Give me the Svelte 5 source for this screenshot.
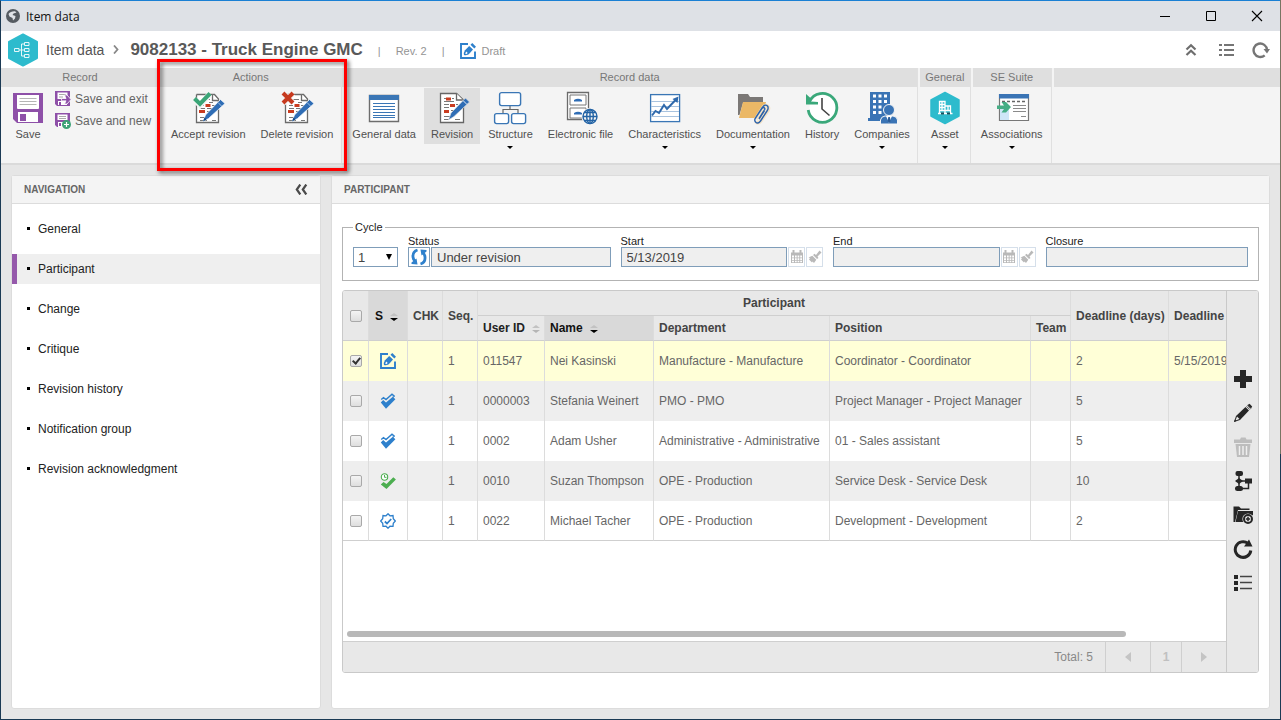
<script>
  const actions = [
    { label: 'Accept revision', icon: 'accept' },
    { label: 'Delete revision', icon: 'delete' }
  ];
  const recordData = [
    { label: 'General data', icon: 'general' },
    { label: 'Revision', icon: 'revision', active: true },
    { label: 'Structure', icon: 'structure', menu: true },
    { label: 'Electronic file', icon: 'efile' },
    { label: 'Characteristics', icon: 'chart', menu: true },
    { label: 'Documentation', icon: 'docs', menu: true },
    { label: 'History', icon: 'history' },
    { label: 'Companies', icon: 'companies', menu: true }
  ];
  const groups = [
    { title: 'Actions', cls: 'g-actions', marked: true, items: actions },
    { title: 'Record data', cls: 'g-data', items: recordData },
    { title: 'General', cls: 'g-general', items: [{ label: 'Asset', icon: 'asset', menu: true }] },
    { title: 'SE Suite', cls: 'g-suite', items: [{ label: 'Associations', icon: 'assoc', menu: true }] }
  ];
  const nav = ['General', 'Participant', 'Change', 'Critique', 'Revision history', 'Notification group', 'Revision acknowledgment'];
  let current = $state('Participant');

  let rows = $state([
    { on: true, icon: 'draft', seq: 1, id: '011547', name: 'Nei Kasinski', dept: 'Manufacture - Manufacture', pos: 'Coordinator - Coordinator', days: 2, due: '5/15/2019' },
    { on: false, icon: 'checks', seq: 1, id: '0000003', name: 'Stefania Weinert', dept: 'PMO - PMO', pos: 'Project Manager - Project Manager', days: 5, due: '' },
    { on: false, icon: 'checks', seq: 1, id: '0002', name: 'Adam Usher', dept: 'Administrative - Administrative', pos: '01 - Sales assistant', days: 5, due: '' },
    { on: false, icon: 'timed', seq: 1, id: '0010', name: 'Suzan Thompson', dept: 'OPE - Production', pos: 'Service Desk - Service Desk', days: 10, due: '' },
    { on: false, icon: 'badge', seq: 1, id: '0022', name: 'Michael Tacher', dept: 'OPE - Production', pos: 'Development - Development', days: 2, due: '' }
  ]);
  const tools = ['plus', 'pencil', 'trash', 'flow', 'folder', 'refresh', 'list'];
  const cols = [26, 39, 35, 35, 67, 109, 176, 201, 40, 98, 168];
</script>

{#snippet sheet()}
  <path d="M6.500 3.500H24.500L28.500 8V31.500H6.500V3.500" fill="#fff" stroke="#6b6b6b" stroke-width="1.300" />
  <path d="M22.500 3.500V9.500H28.500" fill="#fff" stroke="#6b6b6b" stroke-width="1.300" />
  <path d="M14 8.500H20M10 11.500H13M19 11.500H23M10 14.500h4M22 14.500h3M10 17.500H15M17 17.500H22M17 20.500H21M17 23.500H20M10 26.500H17M10 29.500H17M22 29.500H26" stroke="#777" fill="none" />
  <path d="M15.500 13h5v3h-5zM9 19h6v3h-6z" fill="#c93c20" />
{/snippet}

{#snippet pen()}
  <path d="M30.500 8.500L35 12.500L18.500 27.500L13 30.500L15.500 24z" fill="#2f6db5" stroke="#fff" stroke-width=".7" />
  <path d="M28 11.500L31.500 15" stroke="#9fbfe3" stroke-width="1" />
  <path d="M13 30.500L14.500 26.500L16.500 28.500z" fill="#174a86" />
{/snippet}

{#snippet big(name)}
  <svg class="big" viewBox="0 0 36 34" aria-hidden="true">
    {#if name === 'accept'}
      {@render sheet()}{@render pen()}
      <path d="M4.500 8.500L10 14L20 3" fill="none" stroke="#f5f5f5" stroke-width="6" />
      <path d="M4.500 7.500L10 13L20 2.500" fill="none" stroke="#3aa577" stroke-width="4" />
    {:else if name === 'delete'}
      {@render sheet()}{@render pen()}
      <path d="M4.500 2.500L14 12M14 2.500L4.500 12" fill="none" stroke="#f5f5f5" stroke-width="6" />
      <path d="M4 2L14 12M14 2L4 12" fill="none" stroke="#c63a1f" stroke-width="4" />
    {:else if name === 'general'}
      <path d="M3.500 4.500H32.500V30.500H3.500z" fill="#fff" stroke="#6d6d6d" stroke-width="1.400" />
      <path d="M3 4H33V9H3z" fill="#3a76b5" />
      <path d="M7 12.500H29M7 15.500H29M7 18.500H29M7 21.500H29M7 24.500H29M7 26.500H29" stroke="#3a76b5" fill="none" />
    {:else if name === 'revision'}
      <path d="M6.500 2.500H22.500L29.500 9V31.500H6.500z" fill="#fff" stroke="#666" stroke-width="1.300" />
      <path d="M22.500 2.500V9H29" fill="#fff" stroke="#666" stroke-width="1.300" />
      <path d="M10 7.500h2M18 7.500h2M10 10.500H20M10 13.500h5M22 13.500h2M10 16.500h5M17 19.500h5M17 22.500h4M10 25.500H16M10 28.500H15M21 28.500H26" stroke="#777" fill="none" />
      <path d="M12 6.500h5v3h-5zM16 13h5v3h-5zM10 19h5v3h-5z" fill="#c93c20" />
      <path d="M31.500 7L35.500 11L20 25.500L14.500 29L17 22z" fill="#2f6db5" stroke="#dfdfdf" stroke-width=".7" />
      <path d="M29 9.500L33 13.500" stroke="#dfe9f5" stroke-width="1" />
    {:else if name === 'structure'}
      <path d="M18 14V18M11 23V18.500H26V23" fill="none" stroke="#666" stroke-width="1.200" />
      <rect x="7.600" y="1.600" width="21" height="13" rx="2" fill="#fff" stroke="#3a76b5" stroke-width="1.400" />
      <rect x="2.600" y="22.600" width="14" height="10" rx="2" fill="#fff" stroke="#3a76b5" stroke-width="1.400" />
      <rect x="19.600" y="22.600" width="14" height="10" rx="2" fill="#fff" stroke="#3a76b5" stroke-width="1.400" />
    {:else if name === 'efile'}
      <path d="M4.500 1.500H25.500V28.500H4.500z" fill="#fff" stroke="#6b6b6b" stroke-width="1.300" />
      <path d="M7 4H23V14H7zM7 17H23V27H7z" fill="#fff" stroke="#777" />
      <path d="M11 10.500V9Q15 6.500 19 9V10.500zM11 23.500V22Q15 19.500 19 22V23.500z" fill="#2f6db5" />
      <circle cx="27" cy="25.500" r="8.500" fill="#f5f5f5" />
      <g fill="none" stroke="#2363a5" stroke-width="1.400"><circle cx="27" cy="25.500" r="7" /><ellipse cx="27" cy="25.500" rx="3.300" ry="7" /><path d="M27 18.500V32.500M20 25.500H34M21.500 21.500H32.500M21.500 29.500H32.500" /></g>
    {:else if name === 'chart'}
      <rect x="3.600" y="3.600" width="29" height="27" fill="#fff" stroke="#3a76b5" stroke-width="1.300" />
      <path d="M4 10.500H32M4 15.500H32M4 20.500H32M4 25.500H32" stroke="#a9c3df" />
      <path d="M5 24.500L8.500 20L12 22L17 14L20 18L29.500 8" fill="none" stroke="#2f69ac" stroke-width="2" />
      <path d="M31.500 5.500L30.500 12L25.500 8z" fill="#2f69ac" />
    {:else if name === 'docs'}
      <path d="M3 3H13L15 6H28V12H8L4.500 24H3z" fill="#7b7876" />
      <path d="M8 11H31L27 27H4z" fill="#ebb866" />
      <g fill="none" stroke="#f4e4c8" stroke-width="4"><path d="M21 28L28 17Q31 13 33 16Q34 18 32 20.500L25.500 30Q23 33 21 30.500" /></g>
      <path d="M24 28L29.500 19.500M20.500 27L27 17Q30 12.500 32.500 15Q34 17 32 20L25.500 30Q23 33.500 20.500 31Q19 29 20.500 27L26.500 18Q29 15 30 18L24 27.500" fill="none" stroke="#2c62aa" stroke-width="1.400" />
    {:else if name === 'history'}
      <circle cx="18.500" cy="17" r="13" fill="#fff" />
      <path d="M5.500 10.500A14.400 14.400 0 1 1 4.200 19" fill="none" stroke="#3aa87a" stroke-width="2.800" />
      <path d="M2 3V13.500H14V11L7 10.500V7.500z" fill="#3aa87a" />
      <path d="M18 7V18L25.500 24.500" fill="none" stroke="#444" stroke-width="1.600" />
    {:else if name === 'companies'}
      <path d="M6 1H26V17H24V30H4V27H6z" fill="#3a74b5" />
      <path d="M9 3.500h3v3H9zm5.500 0h3v3h-3zm5.500 0h3v3h-3zM9 9h3v3H9zm5.500 0h3v3h-3zm5.500 0h3v3h-3zM9 14.500h3v3H9zm5.500 0h3v3h-3zM9 20h3v3H9zm5.500 0h3v3h-3z" fill="#fff" />
      <g fill="#3a74b5" stroke="#f5f5f5" stroke-width="1"><circle cx="25" cy="19" r="5.500" /><path d="M16.500 33V29Q17 25.500 21 25H29Q33 25.500 33.500 29V33z" /></g>
      <path d="M22 25L25 32L28 25z" fill="#fff" /><path d="M24.300 26h1.600l.8 4-1.600 2-1.600-2z" fill="#2a5c98" />
    {:else if name === 'asset'}
      <path d="M18 1.500L32 9V25L18 32.500L4 25V9z" fill="#2dbbcd" stroke="#2dbbcd" stroke-width="1.500" stroke-linejoin="round" />
      <path d="M11 22.500H25.500M12.500 22V10.500H18V22M18.500 15H23.500V22M12.500 13.500H18M12.500 16.500H18M12.500 19.500H23M15 10.500V20M21 15V20" fill="none" stroke="#fff" stroke-width="1.300" />
      <path d="M14 21.500h3v2h-3zM20 21.500h3v2h-3z" fill="#17505c" />
    {:else}
      <path d="M5.500 3.500H34.500V29.500H5.500z" fill="#fff" stroke="#777" stroke-width="1.200" />
      <path d="M6 17H15V29H6z" fill="#cfe6f7" /><path d="M5 3H35V7.500H5z" fill="#3a74b5" />
      <path d="M8 10.500H31" stroke="#666" stroke-width="1.500" stroke-dasharray="3 2" />
      <path d="M19 14.500H32M19 17.500H32M19 20.500H32M27 25.500H32" stroke="#8a8a8a" />
      <path d="M3 14.500H10L7.500 11H12L17 16L12 21.500H7.500L10 18H3z" fill="#45ae85" />
    {/if}
  </svg>
{/snippet}

{#snippet small(name)}
  <svg class="small" viewBox="0 0 16 16" aria-hidden="true">
    {#if name === 'draft'}
      <path d="M8 1H1V15H15V8.500" fill="none" stroke="#2e80cc" stroke-width="1.900" />
      <path d="M9.200 3L13 6.500L8.800 11.200Q6 12.800 4 12Q3.400 9.500 5 7.200z" fill="#2e80cc" /><path d="M10.500 1.800L12.300 0L16 3.700L14.300 5.400z" fill="#2e80cc" />
      <path d="M6.300 8.500L7.700 9.900L6.300 11.200L5.200 10.500z" fill="#fff" />
    {:else if name === 'checks'}
      <path d="M1.200 6.500L3.500 4.700L6 6.500L12 1.200L14.200 3L13 4.200" fill="none" stroke="#2e80cc" stroke-width="1.400" />
      <path d="M.8 9.500L3.200 7L6 9.500L12.800 3.700L15.400 6.200L6 15.800z" fill="#2e80cc" />
    {:else if name === 'timed'}
      <path d="M.8 11.500L3.500 9L6.500 11L13.300 4.300L15.900 6.500L6.500 16z" fill="#4cae50" />
      <circle cx="4.500" cy="4" r="3.200" fill="#fff" stroke="#4cae50" stroke-width="1.100" /><path d="M4.500 2V4.300H6.500" fill="none" stroke="#4cae50" />
    {:else}
      <path d="M8 .8L10 2.800L13 2.500L13.300 5.700L15.300 8L13.300 10.200L13 13.300L10 13.200L8 15.200L6 13.200L3 13.300L2.700 10.200L.7 8L2.700 5.700L3 2.500L6 2.800z" fill="none" stroke="#2e80cc" stroke-width="1.300" />
      <path d="M4.800 8.500L7 10.500L11.200 6" fill="none" stroke="#2e80cc" stroke-width="1.700" />
    {/if}
  </svg>
{/snippet}

{#snippet tool(name)}
  <svg class="tool-icon" viewBox="0 0 20 20" aria-hidden="true">
    {#if name === 'plus'}
      <path d="M7 1H13V7H19V13H13V19H7V13H1V7H7z" fill="#262626" />
    {:else if name === 'pencil'}
      <path d="M1 19L3 13L12.500 4L16 7.500L7 17z" fill="#262626" /><path d="M2.500 17.500L4 13.500L6.500 16z" fill="#e8e8e8" /><path d="M1 19L1.800 16.500L3.500 18z" fill="#262626" />
      <path d="M13.500 3.300L16.800 6.600M14.500 2.300L17.800 5.600" stroke="#262626" stroke-width=".8" /><path d="M14.500 2L16.500 .8L19.200 3.500L18 5.500z" fill="#262626" />
    {:else if name === 'trash'}
      <path d="M1 2.500H7L8 .5H12.500L13.500 2.500H19V6H1z" fill="#bdbdbd" /><path d="M2.500 7H17.500L16 20H4z" fill="#bdbdbd" />
      <path d="M6.500 9V18M10 9V18M13.500 9V18" stroke="#efefef" stroke-width="1.500" />
    {:else if name === 'flow'}
      <path d="M6 2V18M3 10H14M6 17.500H15.500V10" fill="none" stroke="#262626" stroke-width="1.500" />
      <rect x="2.500" y="0" width="7.500" height="5" rx="2" fill="#262626" /><path d="M6 7L10 10L6 13L2 10z" fill="#262626" /><rect x="12" y="7.500" width="7" height="5" fill="#262626" /><rect x="2" y="15" width="8" height="5" rx="2.500" fill="#262626" />
    {:else if name === 'folder'}
      <path d="M.5 17V1.500H6L8 3.500H16.500V5H5L2 17z" fill="#262626" /><path d="M5 6H20V10L11 17H2.500z" fill="#262626" />
      <circle cx="15" cy="14" r="5.600" fill="#e8e8e8" /><circle cx="15" cy="14" r="4" fill="none" stroke="#262626" stroke-width="2" /><path d="M15 11.800V16.200M12.800 14H17.200" stroke="#262626" stroke-width="1.500" />
    {:else if name === 'refresh'}
      <path d="M15 4.500A7.800 7.800 0 1 0 17.800 11.500" fill="none" stroke="#262626" stroke-width="3" /><path d="M16 .5L19.500 7.500H11z" fill="#262626" />
    {:else}
      <path d="M1 2H5V6H1zM1 8H5V12H1zM1 14H5V18H1z" fill="#262626" /><path d="M7 3.500H19M7 9.500H19M7 15.500H19" stroke="#444" stroke-width="1.300" />
    {/if}
  </svg>
{/snippet}

{#snippet sort(active)}
  <svg class="sort" class:active viewBox="0 0 8 8" aria-hidden="true"><path class="up" d="M0 3L4 0L8 3z" /><path class="down" d="M0 5H8L4 8z" /></svg>
{/snippet}

{#snippet dateButtons(what)}
  <button class="mini" disabled aria-label={'Pick ' + what + ' date'}>
    <svg viewBox="0 0 14 14"><path d="M1 2.500H13V13H1z" fill="#b9b9b9" /><path d="M3.500 0V4M10.500 0V4" stroke="#b9b9b9" stroke-width="2" /><path d="M2 5.500h2v2H2zM5 5.500h1.700v2H5zM7.600 5.500h1.700v2H7.600zM10.200 5.500H12v2h-1.800zM2 8.200h2v1.700H2zM5 8.200h1.700v1.700H5zM7.600 8.200h1.700v1.700H7.600zM10.200 8.200H12v1.700h-1.800zM2 10.700h2v1.500H2zM5 10.700h1.700v1.500H5zM7.600 10.700h1.700v1.500H7.600zM10.200 10.700H12v1.500h-1.800z" fill="#fff" /></svg>
  </button>
  <button class="mini" disabled aria-label={'Clear ' + what + ' date'}>
    <svg viewBox="0 0 14 14"><path d="M11.500 .5L13.500 2.500L9.500 6.500L10.500 8L9 9L5 5L6.500 3.800L8 5z" fill="#b9b9b9" /><path d="M4.300 5.700L8.300 9.700L6 13L4.500 11.500L4 12.500L1 9.500L2 8L.5 7.500z" fill="#b9b9b9" /></svg>
  </button>
{/snippet}

<div class="edge">
<div class="window">
  <div class="titlebar">
    <svg class="globe" viewBox="0 0 14 14" aria-hidden="true"><circle cx="7" cy="7" r="7" fill="#555b61" /><path d="M2.500 5Q4.500 2 9 2.200L10.500 3.500L7.500 4.500L6.500 6L9.500 7L9 9.500L7 11.500L6.500 9L3.500 7.500z" fill="#dfe2e7" /></svg>
    <span>Item data</span>
    <div class="winbuttons">
      <button aria-label="Minimize"><svg viewBox="0 0 12 12"><path d="M1 6.500H11" stroke="#000" /></svg></button>
      <button aria-label="Maximize"><svg viewBox="0 0 12 12"><path d="M1.500 1.500H10.500V10.500H1.500z" fill="none" stroke="#000" /></svg></button>
      <button aria-label="Close"><svg viewBox="0 0 12 12"><path d="M1 1L11 11M11 1L1 11" stroke="#000" stroke-width="1.100" /></svg></button>
    </div>
  </div>

  <header>
    <svg class="hex" viewBox="0 0 30 34" aria-hidden="true">
      <path d="M15 1.500L29 9V25L15 32.500L1 25V9z" fill="#2dbbcd" stroke="#2dbbcd" stroke-width="2" stroke-linejoin="round" />
      <path d="M6.500 15.500H11V18.500H6.500zM16.500 9.500H21V12.500H16.500zM16.500 15.500H21V18.500H16.500zM16.500 21.500H21V24.500H16.500zM11 17H16.500M16 11H13.500V23H16" fill="none" stroke="#e5f7fa" />
    </svg>
    <a class="crumb" href="#items">Item data</a>
    <svg class="chev" viewBox="0 0 6 9" aria-hidden="true"><path d="M1 .5L4.500 4.500L1 8.500" fill="none" stroke="#888" stroke-width="1.800" /></svg>
    <h1>9082133 - Truck Engine GMC</h1>
    <span class="meta bar">|</span>
    <span class="meta">Rev. 2</span>
    <span class="meta bar">|</span>
    <span class="meta state">{@render small('draft')}Draft</span>
    <div class="tools">
      <button aria-label="Collapse"><svg viewBox="0 0 18 18"><path d="M4.500 8.500L9 4.200L13.500 8.500M4.500 14L9 9.700L13.500 14" fill="none" stroke="#6e6e6e" stroke-width="2.200" /></svg></button>
      <button aria-label="List"><svg viewBox="0 0 18 18"><path d="M2 4H5M2 9H5M2 14H5M7 4H17M7 9H17M7 14H17" stroke="#757575" stroke-width="2" /></svg></button>
      <button aria-label="Refresh"><svg viewBox="0 0 18 18"><path d="M12.700 14.300A6.700 6.700 0 1 1 15 9" fill="none" stroke="#757575" stroke-width="2.400" /><path d="M11.500 8H18L15 12.500z" fill="#757575" /></svg></button>
    </div>
  </header>

  <div class="ribbon">
    <section class="group g-record">
      <h2>Record</h2>
      <div class="items">
        <button class="cmd">
          <svg class="big" viewBox="0 0 36 34" aria-hidden="true"><path d="M3 2H33V32H7L3 28z" fill="#8e50a8" /><path d="M7 4H29V17Q29 18 28 18H8Q7 18 7 17z" fill="#fff" /><path d="M9.500 7.500H26.500M9.500 10.500H26.500M9.500 13.500H26.500" stroke="#b5b5b5" /><path d="M8 21H28V31H8z" fill="#fff" /><path d="M10 23H16V30H10z" fill="#8e50a8" /></svg>
          <span>Save</span>
        </button>
        <div class="stack">
          <button class="line">
            <svg viewBox="0 0 16 16" aria-hidden="true"><path d="M0 0H15V15H2L0 13z" fill="#8e50a8" /><path d="M2.500 1.500H12.500V8H2.500zM3 10H12V14H3z" fill="#fff" /><path d="M4 3.500H11M4 6H8" stroke="#aaa" /><path d="M4 11H6V14H4z" fill="#8e50a8" /><path d="M6.500 7.500H11L9.500 4H12L16 8.500L12 13H9.500L11 9.800H6.500z" fill="#8e50a8" stroke="#fff" stroke-width=".8" /></svg>Save and exit</button>
          <button class="line">
            <svg viewBox="0 0 16 16" aria-hidden="true"><path d="M0 0H15V14H2L0 12z" fill="#8e50a8" /><path d="M2.500 1.500H12.500V7H2.500zM3 9H12V14H3z" fill="#fff" /><path d="M4 3.500H11M4 5.500H11" stroke="#aaa" /><path d="M4 10H6V13H4z" fill="#8e50a8" /><circle cx="11.500" cy="11.500" r="4.500" fill="#3da276" /><path d="M9 11.500H14M11.500 9V14" stroke="#fff" stroke-width="1.200" /></svg>Save and new</button>
        </div>
      </div>
    </section>
    {#each groups as g}
      <section class={'group ' + g.cls}>
        <h2>{g.title}</h2>
        <div class="items">
          {#each g.items as b}
            <button class="cmd" class:active={b.active}>
              {@render big(b.icon)}
              <span>{b.label}</span>
              {#if b.menu}<i class="caret"></i>{/if}
            </button>
          {/each}
        </div>
        {#if g.marked}<div class="marker"></div>{/if}
      </section>
    {/each}
    <section class="group g-rest"><h2></h2></section>
  </div>

  <main>
    <nav class="panel" aria-label="Navigation">
      <h3>NAVIGATION
        <button aria-label="Hide navigation"><svg viewBox="0 0 13 11"><path d="M5.300 .5L1.800 5.500L5.300 10.500M11.300 .5L7.800 5.500L11.300 10.500" fill="none" stroke="#4a4a4a" stroke-width="2.200" /></svg></button>
      </h3>
      <ul>
        {#each nav as n}
          <li class:current={n === current}><a href={'#' + n} onclick={() => (current = n)}>{n}</a></li>
        {/each}
      </ul>
    </nav>

    <section class="panel content">
      <h3>PARTICIPANT</h3>
      <div class="inner">
        <fieldset>
          <legend>Cycle</legend>
          <div class="fields">
            <div class="cycle"><select aria-label="Cycle"><option>1</option></select></div>
            <div class="field">
              <label for="status">Status</label>
              <div class="row"><button class="sync" aria-label="Status icon"><svg viewBox="0 0 18 18"><path d="M7.500 2Q2.500 3.500 3 9Q3.200 11.500 5 13" fill="none" stroke="#2e80cc" stroke-width="2.800" /><path d="M1.500 16V14.500L6.500 10.500L7.500 16.500z" fill="#2e80cc" /><path d="M10.500 16Q15.500 14.500 15 9Q14.800 6.500 13 5" fill="none" stroke="#2e80cc" stroke-width="2.800" /><path d="M16.500 2V3.500L11.500 7.500L10.500 1.500z" fill="#2e80cc" /></svg></button><input id="status" readonly value="Under revision" /></div>
            </div>
            <div class="field">
              <label for="start">Start</label>
              <div class="row"><input id="start" readonly value="5/13/2019" />{@render dateButtons('start')}</div>
            </div>
            <div class="field">
              <label for="end">End</label>
              <div class="row"><input id="end" readonly value="" />{@render dateButtons('end')}</div>
            </div>
            <div class="field">
              <label for="closure">Closure</label>
              <div class="row"><input id="closure" readonly value="" /></div>
            </div>
          </div>
        </fieldset>

        <div class="grid">
          <div class="grid-main">
            <div class="scroller">
              <table>
                <colgroup>{#each cols as w}<col style="width:{w}px" />{/each}</colgroup>
                <thead>
                  <tr>
                    <th rowspan="2" class="mid"><input type="checkbox" aria-label="Select all" /></th>
                    <th rowspan="2" class="sorted wide">S{@render sort(true)}</th>
                    <th rowspan="2">CHK</th>
                    <th rowspan="2">Seq.</th>
                    <th colspan="5" class="mid">Participant</th>
                    <th rowspan="2">Deadline (days)</th>
                    <th rowspan="2">Deadline</th>
                  </tr>
                  <tr>
                    <th class="dark">User ID{@render sort(false)}</th>
                    <th class="sorted">Name{@render sort(true)}</th>
                    <th>Department</th>
                    <th>Position</th>
                    <th>Team</th>
                  </tr>
                </thead>
                <tbody>
                  {#each rows as r}
                    <tr class:selected={r.on}>
                      <td class="mid"><input type="checkbox" bind:checked={r.on} aria-label={'Select ' + r.name} /></td>
                      <td class="mid">{@render small(r.icon)}</td>
                      <td></td>
                      <td>{r.seq}</td>
                      <td>{r.id}</td>
                      <td>{r.name}</td>
                      <td>{r.dept}</td>
                      <td>{r.pos}</td>
                      <td></td>
                      <td>{r.days}</td>
                      <td>{r.due}</td>
                    </tr>
                  {/each}
                </tbody>
              </table>
            </div>
            <div class="track"><div class="thumb"></div></div>
            <div class="footer">
              <span>Total: 5</span>
              <button class="arrow" aria-label="Previous page"><svg viewBox="0 0 8 10"><path d="M7 0V10L1 5z" fill="#c4c4c4" /></svg></button>
              <button class="page">1</button>
              <button class="arrow" aria-label="Next page"><svg viewBox="0 0 8 10"><path d="M1 0V10L7 5z" fill="#c4c4c4" /></svg></button>
            </div>
          </div>
          <div class="sidebar">
            {#each tools as t}
              <button aria-label={t} disabled={t === 'trash'}>{@render tool(t)}</button>
            {/each}
          </div>
        </div>
      </div>
    </section>
  </main>
</div>
</div>

<style>
  :global(body) { margin: 0; }
  * { box-sizing: border-box; }
  button { border: 0; background: none; padding: 0; margin: 0; font: inherit; color: inherit; }
  svg { display: block; flex: none; }
  h1, h2, h3, ul { margin: 0; padding: 0; }
  .edge { padding-right: 1px; background: linear-gradient(#777563 63%, #1b3a54 63%); }
  .window {
    min-height: 100vh; display: flex; flex-direction: column;
    border: 1px solid #1b3a54; border-top-color: #1a80d4; border-right: 0;
    font-family: "Liberation Sans", Arial, sans-serif; font-size: 12px; color: #555; background: #e6e6e6;
  }
  .titlebar { height: 30px; background: #dee1e6; display: flex; align-items: center; padding-left: 5px; gap: 6px; color: #111; font-family: "Open Sans", "Noto Sans", sans-serif; font-size: 12px; }
  .globe { width: 14px; height: 14px; }
  .winbuttons { margin-left: auto; display: flex; height: 30px; }
  .winbuttons button { width: 46px; display: flex; align-items: center; justify-content: center; }
  .winbuttons svg { width: 12px; height: 12px; }

  header { height: 37px; background: #fff; display: flex; align-items: center; padding: 0 10px 0 7px; }
  .hex { width: 30px; height: 34px; }
  .crumb { margin-left: 8px; font-size: 14px; color: #555; text-decoration: none; }
  .chev { width: 6px; height: 9px; margin: 0 11px 0 9px; }
  h1 { font-size: 17px; color: #595959; }
  .meta { font-size: 11px; color: #949494; margin-left: 15px; display: flex; align-items: center; padding-top: 2px; }
  .state { gap: 6px; }
  .tools { margin-left: auto; display: flex; gap: 17px; }
  .tools svg { width: 18px; height: 18px; }

  .ribbon { display: flex; background: #f4f4f4; border-bottom: 2px solid #dadada; height: 97px; }
  .group { position: relative; border-right: 1px solid #e0e0e0; flex: none; }
  h2 { height: 19px; line-height: 19px; background: #dfdfdf; color: #777; font-size: 11px; font-weight: normal; text-align: center; }
  .items { display: flex; gap: 1px; padding-top: 1px; align-items: flex-start; }
  .g-record { width: 159px; border-right-color: #f4f4f4; }
  .g-record .items { padding-left: 6px; }
  .g-actions .items { padding-left: 4px; padding-right: 1px; }
  .g-data .items { padding-left: 3px; }
  .g-general, .g-suite, .g-rest { margin-left: 2px; }
  .g-general .items { padding: 1px 4px 0; }
  .g-suite .items { padding: 1px 1px 0 1px; }
  .g-rest { flex: 1; border: 0; }
  .cmd { display: flex; flex-direction: column; align-items: center; padding: 3px 7px 0; font-size: 11px; line-height: 16px; min-height: 56px; color: #505050; white-space: nowrap; }
  .cmd.active { background: #dfdfdf; }
  .big { width: 36px; height: 34px; margin: 0 -4px 1px; }
  .caret { width: 0; border: 3px solid transparent; border-top-color: #000; border-bottom: 0; margin-top: 4px; }
  .stack { display: flex; flex-direction: column; padding-top: 2px; margin-left: 5px; }
  .line { display: flex; align-items: center; gap: 4px; height: 22px; font-size: 12px; line-height: 14px; color: #666; white-space: nowrap; padding-bottom: 4px; }
  .line svg { width: 16px; height: 16px; }
  .marker { position: absolute; inset: -9px -6px -8px -3px; border: 3px solid #fe0000; filter: drop-shadow(2px 2px 2px rgba(0, 0, 0, .6)); z-index: 2; pointer-events: none; }

  main { flex: 1; display: grid; grid-template-columns: 310px 1fr; gap: 10px; padding: 10px; }
  .panel { background: #fff; border: 1px solid #dcdcdc; border-radius: 3px; display: flex; flex-direction: column; min-width: 0; }
  h3 { height: 28px; flex: none; display: flex; align-items: center; justify-content: space-between; padding: 0 12px; background: #f4f4f4; border-bottom: 1px solid #dcdcdc; font-size: 10px; color: #666; }
  h3 svg { width: 13px; height: 11px; }
  ul { list-style: none; padding-top: 10px; display: flex; flex-direction: column; gap: 10px; }
  li { height: 30px; border-left: 5px solid transparent; }
  li.current { background: #efefef; border-left-color: #9559ab; }
  li a { display: flex; align-items: center; height: 30px; padding-left: 10px; color: #222; text-decoration: none; }
  li a::before { content: ""; width: 3px; height: 3px; background: #000; margin: 0 8px 2px 0; }

  .inner { flex: 1; display: flex; flex-direction: column; padding: 17px 10px 35px; min-width: 0; }
  fieldset { margin: 0 0 9px; border: 1px solid #b3b3b3; padding: 2px 10px 13px; min-width: 0; color: #222; }
  legend { font-size: 11px; line-height: 12px; padding: 0 2px; }
  .fields { display: flex; gap: 10px; align-items: flex-end; }
  .cycle { width: 45px; position: relative; flex: none; }
  .cycle::after { content: ""; position: absolute; right: 6px; top: 7px; border: 3px solid transparent; border-top: 6px solid #000; border-bottom: 0; pointer-events: none; }
  select { appearance: none; display: block; width: 100%; height: 20px; border: 1px solid #7f9db9; border-radius: 0; background: #fff; padding: 0 4px; font: 13px "Liberation Sans", Arial, sans-serif; color: #444; }
  .field { flex: 1; min-width: 0; }
  label { display: block; font-size: 11px; line-height: 12px; }
  .row { display: flex; gap: 1px; }
  .row input { flex: 1; min-width: 0; width: 0; height: 20px; border: 1px solid #7f9db9; background: #efefef; padding: 0 5px; font: 13px "Liberation Sans", Arial, sans-serif; color: #444; border-radius: 0; }
  .sync { width: 22px; height: 20px; border: 1px solid #7f9db9; display: grid; place-items: center; }
  .sync svg { width: 18px; height: 18px; }
  .mini { width: 17px; height: 20px; border: 1px solid #d5dfea; display: grid; place-items: center; }
  .mini svg { width: 14px; height: 14px; }

  .grid { flex: 1; display: flex; border: 1px solid #c9c9c9; border-radius: 3px; min-width: 0; overflow: hidden; }
  .grid-main { flex: 1; min-width: 0; display: flex; flex-direction: column; }
  .scroller { flex: 1; overflow: hidden; }
  table { table-layout: fixed; width: 994px; border-collapse: separate; border-spacing: 0; }
  th, td { padding: 0 0 0 5px; text-align: left; border-right: 1px solid #dcdcdc; white-space: nowrap; overflow: hidden; }
  th { height: 25px; background: #e8e8e8; border-bottom: 1px solid #cfcfcf; color: #444; font-size: 12px; }
  th.sorted { background: #d9d9d9; color: #111; }
  th.dark { color: #222; }
  th.wide { padding-left: 6px; }
  td { height: 40px; color: #666; }
  th.mid, td.mid { text-align: center; padding: 0; }
  td :global(svg) { margin: 0 auto; }
  tbody tr:nth-child(even) { background: #eee; }
  tbody tr.selected { background: #ffffd7; }
  tbody tr:last-child td { border-bottom: 1px solid #cfcfcf; }
  .sort { display: inline-block; width: 8px; height: 8px; margin-left: 7px; vertical-align: -1px; }
  .sort .up { fill: #c2c2c2; }
  .sort .down { fill: #b5b5b5; }
  .sort.active .down { fill: #000; }
  .small { width: 16px; height: 16px; }
  input[type="checkbox"] { appearance: none; display: block; width: 12px; height: 12px; margin: 0 auto; border: 1px solid #a9a9a9; border-radius: 2px; background: linear-gradient(#f4f4f4, #dedede); }
  input[type="checkbox"]:checked::after { content: ""; display: block; width: 3px; height: 6px; margin: 0 0 0 3px; border: solid #333; border-width: 0 2px 2px 0; transform: rotate(40deg); }
  .track { margin: 0 4px 4px; }
  .thumb { width: 89%; height: 6px; border-radius: 3px; background: #b8b8b8; }
  .footer { height: 31px; border-top: 1px solid #cfcfcf; background: #e8e8e8; display: flex; justify-content: flex-end; align-items: stretch; color: #888; }
  .footer span { align-self: center; padding-right: 12px; }
  .footer button { border-left: 1px solid #cfcfcf; display: grid; place-items: center; }
  .arrow { width: 45px; }
  .arrow svg { width: 8px; height: 10px; }
  .page { width: 31px; font-weight: bold; color: #c0c0c0; }
  .sidebar { width: 32px; border-left: 1px solid #c9c9c9; background: #e8e8e8; display: flex; flex-direction: column; align-items: center; justify-content: center; gap: 14px; padding-bottom: 2px; }
  .tool-icon { width: 20px; height: 20px; }
</style>
